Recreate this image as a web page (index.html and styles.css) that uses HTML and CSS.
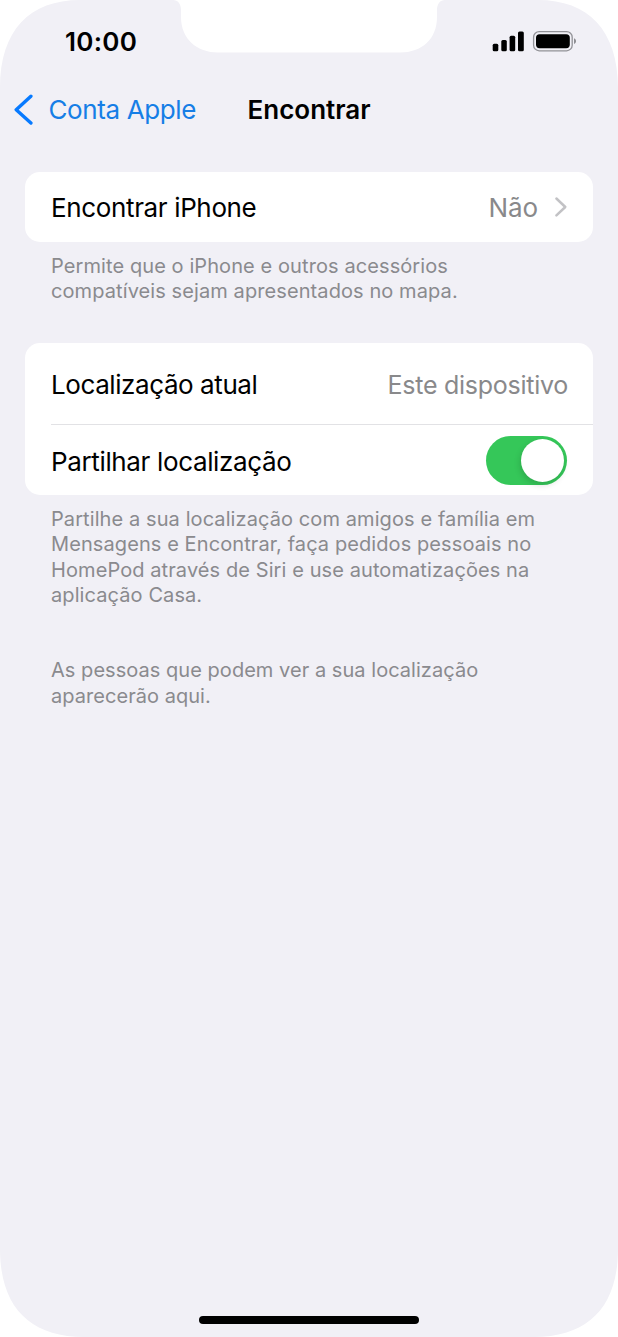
FILE: index.html
```html
<!DOCTYPE html>
<html lang="pt">
<head>
<meta charset="utf-8">
<title>Encontrar</title>
<link rel="stylesheet" href="styles.css">
</head>
<body>
<div class="phone">
  <svg class="shell" viewBox="0 0 618 1337" aria-hidden="true"><path fill="#f1f0f6" d="M0 88C0 30 30 0 80 0H173C178 0 181 4 181 10V17C181 39 197 52.5 218 52.5H400C422 52.5 437 39 437 17V10C437 4 440 0 445 0H538C588 0 618 30 618 88V1249C618 1307 588 1337 534 1337H84C30 1337 0 1307 0 1249Z"/></svg>
  <header class="status">
    <span class="time">10:00</span>
    <svg class="indicators" width="86" height="24" viewBox="0 0 86 24" aria-hidden="true">
      <rect x="2.7" y="13.7" width="5.6" height="7.5" rx="1.5"/>
      <rect x="11.3" y="10" width="5.5" height="11.2" rx="1.5"/>
      <rect x="19.6" y="5.7" width="5.6" height="15.5" rx="1.5"/>
      <rect x="28" y="1.5" width="5.8" height="19.7" rx="1.5"/>
      <rect x="43.6" y="1.6" width="38.6" height="19.2" rx="5.6" fill="none" stroke="#929297" stroke-width="1.3"/>
      <rect x="46" y="4.2" width="33.8" height="14" rx="3.6"/>
      <path d="M84 8.2C86.7 9.2 86.7 13 84 14Z" fill="#8e8e93"/>
    </svg>
  </header>
  <nav class="nav">
    <a class="back"><svg width="20" height="32" viewBox="0 0 20 32" aria-hidden="true"><path d="M16.9 2.2L2.2 15.7L16.9 29" fill="none" stroke="#077aff" stroke-width="3.4" stroke-linecap="round" stroke-linejoin="round"/></svg><span class="back-text">Conta Apple</span></a>
    <h1 class="title">Encontrar</h1>
  </nav>
  <main class="content">
    <section class="card">
      <div class="row row-find"><span class="label find">Encontrar iPhone</span><span class="value no">Não</span><svg class="chevron" width="14" height="22" viewBox="0 0 14 22" aria-hidden="true"><path d="M2.4 2.5L11.3 11L2.4 19.3" fill="none" stroke="#c2c2c5" stroke-width="2.5" stroke-linecap="round" stroke-linejoin="round"/></svg></div>
    </section>
    <p class="note">Permite que o iPhone e outros acessórios<br>compatíveis sejam apresentados no mapa.</p>
    <section class="card second">
      <div class="row row-current"><span class="label current">Localização atual</span><span class="value device">Este dispositivo</span></div>
      <div class="row row-share"><span class="label share">Partilhar localização</span><span class="switch"><span class="knob"></span></span></div>
    </section>
    <p class="note">Partilhe a sua localização com amigos e família em<br>Mensagens e Encontrar, faça pedidos pessoais no<br>HomePod através de Siri e use automatizações na<br>aplicação Casa.</p>
    <p class="note people">As pessoas que podem ver a sua localização<br>aparecerão aqui.</p>
  </main>
  <div class="home"></div>
</div>
</body>
</html>
```
FILE: styles.css
```css
* { box-sizing: border-box; }
body { margin: 0; background: #fff; font-family: Inter, "Liberation Sans", sans-serif; color: #000; }
.phone { position: relative; isolation: isolate; width: 618px; height: 1337px; display: flex; flex-direction: column; overflow: hidden; }
.shell { position: absolute; inset: 0; z-index: -1; width: 618px; height: 1337px; }
svg { display: block; flex: none; }
.status { height: 80px; padding: 26px 42px 0 65px; display: flex; justify-content: space-between; align-items: flex-start; }
.time { font-size: 26px; line-height: 32px; font-weight: 600; letter-spacing: .3px; }
.indicators { margin-top: 4px; }
.nav { height: 92px; padding: 14px 0 0 14px; display: grid; grid-template-columns: 233.5px 1fr; align-items: start; }
.back { display: flex; color: #167ee6; font-size: 26px; line-height: 32px; letter-spacing: -.38px; }
.back-text { margin-left: 14.5px; }
.title { margin: 0; font-size: 26px; line-height: 32px; font-weight: 600; letter-spacing: 0; }
.content { flex: 1; padding: 0 25px; }
.card { background: #fff; border-radius: 15px; }
.row { display: flex; align-items: center; padding-right: 25px; margin-left: 26px; font-size: 26px; line-height: 32px; white-space: nowrap; letter-spacing: -.36px; }
.label { flex: 1; }
.current { letter-spacing: -.42px; }
.value { color: #89898b; }
.row-find { height: 69.5px; padding-top: 2px; }
.no { letter-spacing: -.1px; }
.chevron { margin: -2px 0 0 16px; }
.note { margin: 12px 0 0 26px; font-size: 20px; line-height: 25.3px; color: #8a8a8e; white-space: nowrap; letter-spacing: .09px; }
.second { margin-top: 39px; }
.row-current { height: 82px; padding-top: 3px; border-bottom: 1px solid #e2e2e5; }
.row-share { height: 70px; }
.share { padding-top: 3px; }
.device { font-size: 25px; letter-spacing: -.26px; }
.switch { width: 81px; height: 49px; border-radius: 25px; background: #35c759; padding: 3px; display: flex; justify-content: flex-end; margin-right: 1px; }
.knob { width: 43px; height: 43px; border-radius: 50%; background: #fff; box-shadow: -1px 3px 6px rgba(0,0,0,.15); }
.people { margin-top: 50px; letter-spacing: .04px; }
.home { width: 220px; height: 8px; margin: 0 0 13px 199px; border-radius: 4px; background: #000; }
```
